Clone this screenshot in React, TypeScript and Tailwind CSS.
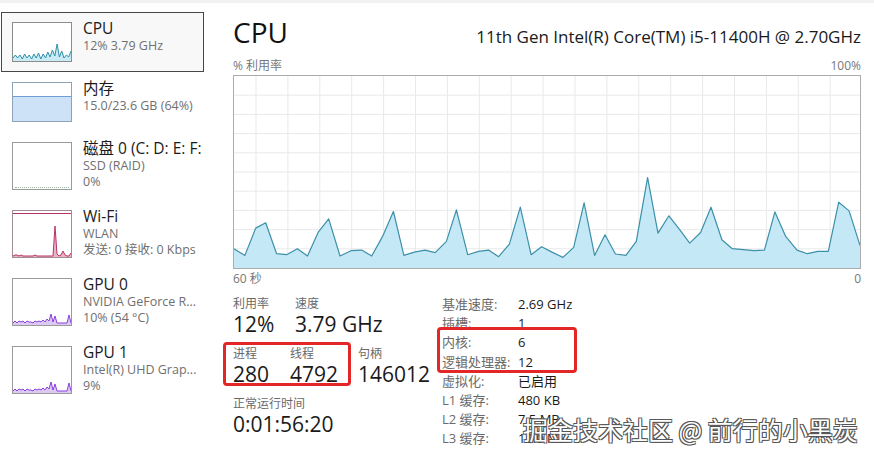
import type {ReactNode} from 'react'

// CPU usage samples, traced from the reference graph (x 36..1536, y -78..500 space)
const samples: [number, number][] = [
  [36, 442], [62, 462], [88, 380], [112, 364], [138, 457], [162, 460], [188, 442], [212, 464],
  [238, 392], [263, 352], [290, 464], [316, 448], [342, 446], [366, 464], [392, 405], [418, 330],
  [443, 462], [468, 452], [494, 446], [518, 454], [545, 420], [569, 325], [596, 460], [622, 450],
  [646, 446], [670, 466], [696, 428], [722, 317], [748, 460], [773, 436], [798, 452], [824, 468],
  [850, 438], [875, 304], [900, 462], [925, 400], [950, 458], [975, 462], [1000, 420], [1027, 228],
  [1052, 395], [1078, 343], [1103, 383], [1128, 425], [1154, 393], [1179, 317], [1205, 415], [1230, 442],
  [1256, 445], [1282, 448], [1307, 446], [1332, 331], [1358, 405], [1385, 446], [1410, 457], [1435, 450],
  [1460, 450], [1485, 302], [1510, 328], [1536, 432],
]

const W = 626
const H = 192

function CpuChart() {
  const pts = samples.map(([x, y]) => [((x - 36) / 1500) * W, ((y + 78) / 578) * H])
  const line = pts.map(([x, y]) => `${x.toFixed(1)},${y.toFixed(1)}`).join(' ')
  const area = `0,${H} ${line} ${W},${H}`
  const rows = Array.from({length: 9}, (_, i) => (i + 1) * (H / 10))
  const cols = Array.from({length: 20}, (_, i) => 22 + i * 31.9).filter((x) => x < W)
  return (
    <div className="h-[194px] w-[628px] border border-[#ababab] bg-white">
      <svg width={W} height={H} className="block">
        {rows.map((y) => (
          <line key={`r${y}`} x1={0} x2={W} y1={y} y2={y} stroke="#e9e9e9" strokeWidth={1} />
        ))}
        {cols.map((x) => (
          <line key={`c${x}`} x1={x} x2={x} y1={0} y2={H} stroke="#e9e9e9" strokeWidth={1} />
        ))}
        <polygon points={area} fill="#c4e8f6" />
        <polyline points={line} fill="none" stroke="#3c90a8" strokeWidth={1.2} strokeLinejoin="round" />
      </svg>
    </div>
  )
}

function spikes(heights: number[], w: number, base: number) {
  const step = w / (heights.length - 1)
  return heights.map((h, i) => `${(i * step).toFixed(1)},${(base - h).toFixed(1)}`).join(' ')
}

function MiniGraph({
  h,
  heights,
  stroke,
  fill,
  border,
  top,
}: {
  h: number
  heights: number[]
  stroke: string
  fill: string
  border: string
  top?: string
}) {
  const w = 58
  const inner = h - 2
  const base = inner - 1
  const line = spikes(heights, w, base)
  return (
    <div className="shrink-0 border bg-white" style={{borderColor: border, height: h, width: 60}}>
      <svg width={w} height={inner} className="block">
        {top ? <line x1={0} x2={w} y1={2.5} y2={2.5} stroke={top} strokeWidth={1} /> : null}
        <polygon points={`0,${inner} ${line} ${w},${inner}`} fill={fill} />
        <polyline points={line} fill="none" stroke={stroke} strokeWidth={1} />
      </svg>
    </div>
  )
}

function MemoryThumb() {
  return (
    <div className="flex h-[40px] w-[60px] shrink-0 flex-col border border-[#8fa3b8] bg-white">
      <div className="h-[13px]" />
      <div className="flex-1 border-t border-[#6b9fd6] bg-[#cde2f7]" />
    </div>
  )
}

function DiskThumb() {
  return (
    <div className="flex h-[48px] w-[60px] shrink-0 flex-col justify-end border border-[#9a9a9a] bg-white">
      <div className="mx-[2px] mb-[1px] border-b border-dotted border-[#9ab59a]" />
    </div>
  )
}

type ItemProps = {
  thumb: ReactNode
  title: string
  lines: string[]
  selected?: boolean
}

function SideItem({thumb, title, lines, selected}: ItemProps) {
  return (
    <div
      className={
        selected
          ? 'flex w-[203px] gap-[11px] border border-[#474747] bg-[#f8f8f8] py-[9px] pl-[10px]'
          : 'flex w-[203px] gap-[11px] py-[10px] pl-[11px]'
      }
    >
      {thumb}
      <div className="-mt-[4px] whitespace-nowrap">
        <p className="text-[15.5px] leading-[20px] text-[#1b1b1b]">{title}</p>
        {lines.map((l) => (
          <p key={l} className="text-[12.5px] leading-[16px] text-[#707070]">
            {l}
          </p>
        ))}
      </div>
    </div>
  )
}

function Stat({label, value, w}: {label: string; value: string; w: string}) {
  return (
    <div className={w}>
      <p className="text-[12px] leading-[16px] text-[#6a6a6a]">{label}</p>
      <p className="text-[21px] leading-[24px] text-[#1a1a1a]">{value}</p>
    </div>
  )
}

const specs: [string, string][] = [
  ['基准速度:', '2.69 GHz'],
  ['插槽:', '1'],
  ['内核:', '6'],
  ['逻辑处理器:', '12'],
  ['虚拟化:', '已启用'],
  ['L1 缓存:', '480 KB'],
  ['L2 缓存:', '7.5 MB'],
  ['L3 缓存:', '12.0 MB'],
]

const cpuMini = [2, 5, 2, 5, 1, 6, 2, 5, 1, 6, 2, 7, 1, 6, 2, 8, 3, 10, 4, 16, 3, 9, 2, 5, 3, 9]
const wifiMini = [0, 1, 1, 0, 1, 0, 0, 0, 0, 0, 0, 1, 0, 0, 0, 0, 0, 0, 0, 0, 0, 30, 2, 0, 1, 5, 1, 0, 0, 3]
const gpuMini = [1, 3, 1, 3, 2, 3, 1, 3, 2, 2, 1, 3, 2, 3, 2, 4, 2, 5, 3, 10, 2, 8, 1, 1, 1, 1, 1, 1, 9, 1]

export default function App() {
  return (
    <div className="relative h-[459px] w-[874px] overflow-hidden bg-white font-['Open_Sans','Noto_Sans_CJK_SC',sans-serif]">
      <div className="h-[3px] bg-[#f1f1f1]" />
      <div className="flex">
        <aside className="w-[233px] shrink-0 pl-[1px] pt-[9px]">
          <SideItem
            selected
            title="CPU"
            lines={['12% 3.79 GHz']}
            thumb={
              <MiniGraph h={40} heights={cpuMini} stroke="#2d8fa8" fill="#c9ebf5" border="#8c8c8c" />
            }
          />
          <SideItem title="内存" lines={['15.0/23.6 GB (64%)']} thumb={<MemoryThumb />} />
          <SideItem title="磁盘 0 (C: D: E: F:" lines={['SSD (RAID)', '0%']} thumb={<DiskThumb />} />
          <SideItem
            title="Wi-Fi"
            lines={['WLAN', '发送: 0 接收: 0 Kbps']}
            thumb={
              <MiniGraph
                h={48}
                heights={wifiMini}
                stroke="#b83366"
                fill="#e6b3c7"
                border="#a08c94"
                top="#b83366"
              />
            }
          />
          <SideItem
            title="GPU 0"
            lines={['NVIDIA GeForce R...', '10% (54 °C)']}
            thumb={
              <MiniGraph h={48} heights={gpuMini} stroke="#8a3ee0" fill="#dccaf3" border="#9a9a9a" />
            }
          />
          <SideItem
            title="GPU 1"
            lines={['Intel(R) UHD Grap...', '9%']}
            thumb={
              <MiniGraph h={48} heights={gpuMini} stroke="#8a3ee0" fill="#dccaf3" border="#9a9a9a" />
            }
          />
        </aside>

        <main className="w-[628px] pt-[15px]">
          <div className="flex items-baseline justify-between">
            <h1 className="text-[28px] leading-[28px] text-[#111]">CPU</h1>
            <p className="text-[17px] leading-[20px] text-[#1a1a1a]">11th Gen Intel(R) Core(TM) i5-11400H @ 2.70GHz</p>
          </div>
          <div className="mt-[11px] flex justify-between text-[12px] leading-[16px] text-[#777]">
            <span>% 利用率</span>
            <span>100%</span>
          </div>
          <div className="mt-[1px]">
            <CpuChart />
          </div>
          <div className="mt-[2px] flex justify-between text-[12px] leading-[16px] text-[#777]">
            <span>60 秒</span>
            <span>0</span>
          </div>

          <div className="mt-[8px] flex">
            <div className="flex w-[209px] flex-col gap-[10px] pt-[1px]">
              <div className="flex">
                <Stat w="w-[62px]" label="利用率" value="12%" />
                <Stat w="w-[100px]" label="速度" value="3.79 GHz" />
              </div>
              <div className="flex">
                <Stat w="w-[57px]" label="进程" value="280" />
                <Stat w="w-[68px]" label="线程" value="4792" />
                <Stat w="w-[80px]" label="句柄" value="146012" />
              </div>
              <Stat w="w-[150px]" label="正常运行时间" value="0:01:56:20" />
            </div>
            <div className="flex flex-col">
              {specs.map(([k, v]) => (
                <div key={k} className="flex text-[13px] leading-[19.2px]">
                  <span className="w-[76px] text-[#6a6a6a]">{k}</span>
                  <span className="text-[#1a1a1a]">{v}</span>
                </div>
              ))}
            </div>
          </div>
        </main>
      </div>

      {/* annotation boxes */}
      <div className="absolute left-[223px] top-[342px] h-[44px] w-[128px] rounded-[4px] border-[3px] border-[#e32626]" />
      <div className="absolute left-[437px] top-[327px] h-[46px] w-[140px] rounded-[4px] border-[3px] border-[#e32626]" />

      <div className="absolute left-[523px] top-[413px] font-['Noto_Sans_CJK_SC',sans-serif] text-[25px] leading-[32px] text-white [text-shadow:1px_1px_0_#555,-1px_-1px_0_#555,1px_-1px_0_#555,-1px_1px_0_#555]">
        掘金技术社区 @ 前行的小黑炭
      </div>
    </div>
  )
}
